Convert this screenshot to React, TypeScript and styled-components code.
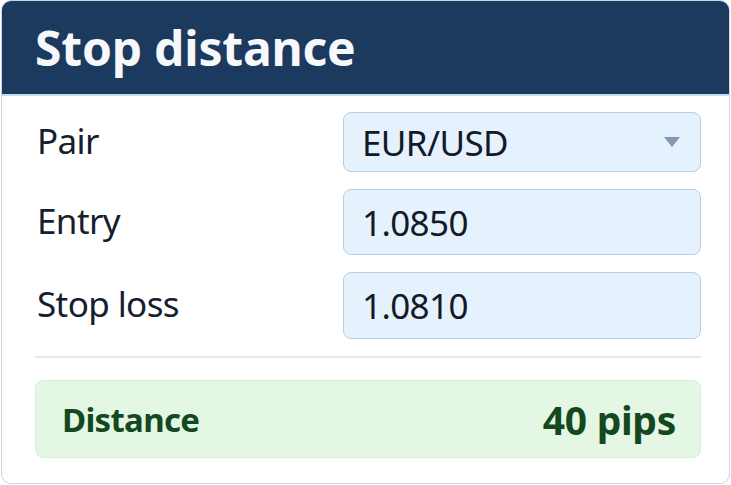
import React from "react";
import styled, { createGlobalStyle } from "styled-components";

const GlobalStyle = createGlobalStyle`
  html, body {
    margin: 0;
    padding: 0;
    background: #ffffff;
  }
  body {
    font-family: "Noto Sans", "Open Sans", sans-serif;
  }
`;

const Card = styled.section`
  box-sizing: border-box;
  width: 729px;
  height: 484px;
  margin: 0 0 0 1px;
  border: 1.5px solid #c9d6e4;
  border-radius: 10px;
  background: #ffffff;
  overflow: hidden;
  display: flex;
  flex-direction: column;
`;

const Header = styled.header`
  height: 93px;
  flex: none;
  background: #1b3a5e;
  display: flex;
  align-items: center;
  padding: 0 33px;
  border-bottom: 2px solid #c7dbee;
`;

const Title = styled.h1`
  margin: 0;
  color: #f6f8fb;
  font-size: 48px;
  font-weight: 700;
  letter-spacing: -0.2px;
`;

const Body = styled.div`
  display: flex;
  flex-direction: column;
  padding: 16px 28px 0 33px;
`;

const Form = styled.div`
  display: grid;
  grid-template-columns: 308px 1fr;
  row-gap: 17px;
  align-items: center;
`;

const Label = styled.label`
  color: #15202e;
  font-size: 35px;
  padding-left: 2px;
  padding-bottom: 4px;
  letter-spacing: -0.6px;
`;

const Field = styled.div<{ $h: number }>`
  box-sizing: border-box;
  height: ${(p) => p.$h}px;
  border: 1.5px solid #b6cfe6;
  border-radius: 8px;
  background: #e5f1fd;
  display: flex;
  align-items: center;
  justify-content: space-between;
  padding: 0 20px 0 18px;
  color: #121a26;
  font-size: 35px;
  letter-spacing: -0.6px;
`;

const Caret = styled.svg`
  width: 16px;
  height: 10px;
  fill: #8198b0;
`;

const Divider = styled.hr`
  margin: 17px 0 22px 0;
  border: none;
  height: 2px;
  background: #e3e8ee;
`;

const Result = styled.div`
  box-sizing: border-box;
  height: 78px;
  border: 1.5px solid #d6f0d8;
  border-radius: 8px;
  background: #e3f7e4;
  display: flex;
  align-items: center;
  justify-content: space-between;
  padding: 0 24px 0 26px;
  color: #14491f;
  font-weight: 700;
`;

const ResultLabel = styled.span`
  font-size: 33px;
  letter-spacing: -0.7px;
`;

const ResultValue = styled.span`
  font-size: 39px;
  letter-spacing: -0.3px;
`;

export default function App() {
  return (
    <>
      <GlobalStyle />
      <Card>
        <Header>
          <Title>Stop distance</Title>
        </Header>
        <Body>
          <Form>
            <Label>Pair</Label>
            <Field $h={60}>
              <span>EUR/USD</span>
              <Caret viewBox="0 0 16 10">
                <path d="M0 0 H16 L8 10 Z" />
              </Caret>
            </Field>
            <Label>Entry</Label>
            <Field $h={66}>
              <span>1.0850</span>
            </Field>
            <Label>Stop loss</Label>
            <Field $h={67}>
              <span>1.0810</span>
            </Field>
          </Form>
          <Divider />
          <Result>
            <ResultLabel>Distance</ResultLabel>
            <ResultValue>40 pips</ResultValue>
          </Result>
        </Body>
      </Card>
    </>
  );
}
